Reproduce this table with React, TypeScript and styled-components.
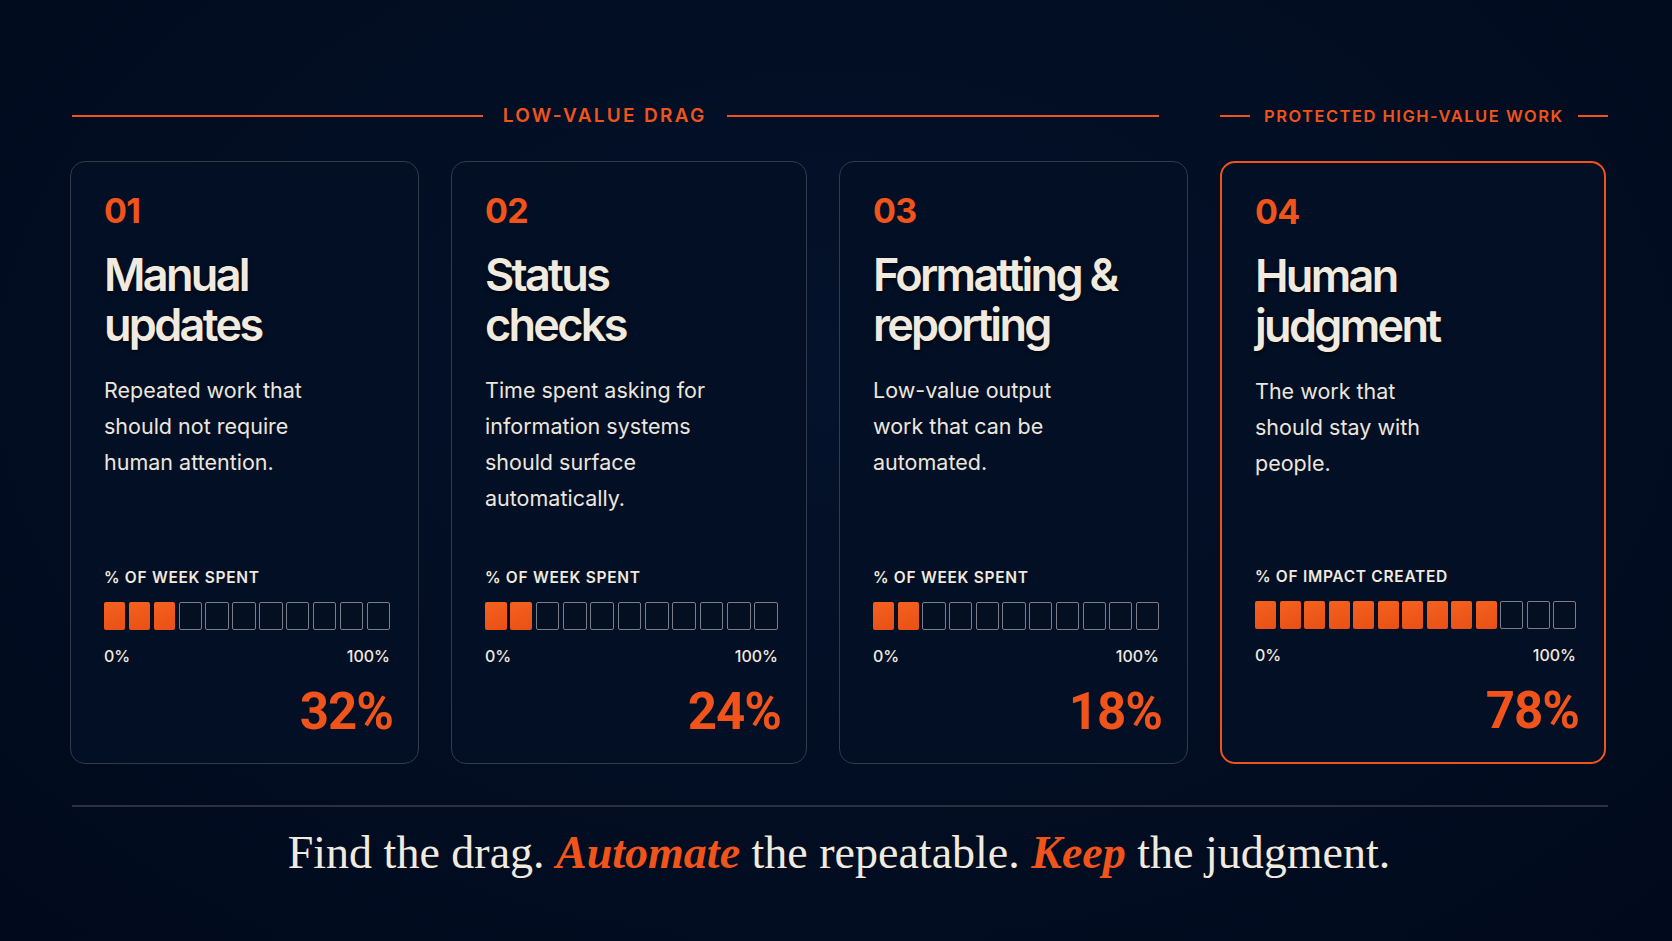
import React from "react"
import styled, { createGlobalStyle, css } from "styled-components"

const ORANGE = "#f0541b"
const CREAM = "#f1eadf"

const GlobalStyle = createGlobalStyle`
  html, body {
    margin: 0;
    padding: 0;
    background: #020d22;
  }
  * {
    box-sizing: border-box;
  }
`

const Page = styled.div`
  width: 1672px;
  height: 941px;
  padding: 102px 64px 0 70px;
  background: radial-gradient(ellipse at 50% 40%, #04122b 0%, #020d22 60%, #010a1c 100%);
  font-family: Inter, "Noto Sans", sans-serif;
  color: ${CREAM};
`

const Columns = styled.div`
  display: grid;
  grid-template-columns: 349px 356px 349px 386px;
  column-gap: 32px;
`

const HeaderRow = styled(Columns)`
  height: 28px;
  margin-bottom: 31px;
`

const Group = styled.div<{ $span?: number; $short?: boolean }>`
  grid-column: span ${(p) => p.$span ?? 1};
  display: flex;
  align-items: center;
  gap: ${(p) => (p.$short ? "14px" : "20px")};
  padding-right: ${(p) => (p.$span ? "29px" : "0")};
  padding-left: ${(p) => (p.$span ? "2px" : "0")};
`

const Rule = styled.span<{ $fixed?: boolean; $grow?: number }>`
  height: 1.5px;
  background: ${ORANGE};
  ${(p) =>
    p.$fixed
      ? css`
          width: 30px;
          flex: none;
        `
      : css`
          flex: ${p.$grow ?? 1};
        `}
`

const GroupLabel = styled.span<{ $small?: boolean }>`
  font-size: ${(p) => (p.$small ? "16.5px" : "19px")};
  font-weight: 600;
  letter-spacing: ${(p) => (p.$small ? "1.5px" : "2.3px")};
  color: ${ORANGE};
  white-space: nowrap;
  line-height: 28px;
`

const Card = styled.div<{ $accent?: boolean }>`
  height: 603px;
  display: flex;
  flex-direction: column;
  padding: 32px 28px 26px 33px;
  border-radius: 15px;
  border: ${(p) => (p.$accent ? `2px solid ${ORANGE}` : "1.5px solid #323a4b")};
  background: #030f25;
`

const Num = styled.div`
  font-size: 34px;
  line-height: 34px;
  font-weight: 700;
  color: ${ORANGE};
  letter-spacing: -0.02em;
`

const Title = styled.h2`
  margin: 22px 0 0;
  font-size: 45px;
  line-height: 50px;
  font-weight: 600;
  letter-spacing: -0.06em;
  color: ${CREAM};
  text-shadow: 0 2px 4px rgba(0, 0, 0, 0.6);
`

const Desc = styled.p`
  margin: 22px 0 0;
  font-size: 21.5px;
  line-height: 36px;
  font-weight: 400;
  letter-spacing: 0;
  color: #ece6dc;
`

const Bottom = styled.div`
  margin-top: auto;
  display: flex;
  flex-direction: column;
`

const MetricLabel = styled.div`
  font-size: 15.5px;
  line-height: 20px;
  font-weight: 600;
  letter-spacing: 0.7px;
  color: ${CREAM};
`

const Blocks = styled.div`
  display: flex;
  gap: 3.5px;
  height: 28px;
  margin-top: 14px;
`

const Block = styled.span<{ $on: boolean }>`
  flex: 1;
  border-radius: 2px;
  ${(p) =>
    p.$on
      ? css`
          background: linear-gradient(160deg, #f4621f, #e94f16);
        `
      : css`
          border: 1.5px solid #7a7e88;
          background: #040f22;
        `}
`

const Scale = styled.div`
  display: flex;
  justify-content: space-between;
  margin-top: 16px;
  font-size: 16px;
  line-height: 20px;
  font-weight: 500;
  color: ${CREAM};
`

const Big = styled.div`
  margin: 21px -3px 0 0;
  text-align: right;
  font-family: Roboto, Inter, sans-serif;
  font-size: 51px;
  line-height: 50px;
  font-weight: 700;
  letter-spacing: -0.02em;
  color: ${ORANGE};
`

const Divider = styled.div`
  margin-top: 41px;
  margin-left: 2px;
  height: 1.5px;
  background: #2a3242;
`

const Tagline = styled.p`
  margin: 21px 0 0;
  text-align: center;
  font-family: "Liberation Serif", "Times New Roman", serif;
  font-size: 46px;
  line-height: 50px;
  color: ${CREAM};
`

const Em = styled.em`
  color: ${ORANGE};
  font-weight: 700;
`

type Item = {
  num: string
  title: string[]
  desc: string[]
  label: string
  filled: number
  total: number
  pct: string
  accent?: boolean
}

const items: Item[] = [
  {
    num: "01",
    title: ["Manual", "updates"],
    desc: ["Repeated work that", "should not require", "human attention."],
    label: "% OF WEEK SPENT",
    filled: 3,
    total: 11,
    pct: "32%",
  },
  {
    num: "02",
    title: ["Status", "checks"],
    desc: ["Time spent asking for", "information systems", "should surface", "automatically."],
    label: "% OF WEEK SPENT",
    filled: 2,
    total: 11,
    pct: "24%",
  },
  {
    num: "03",
    title: ["Formatting &", "reporting"],
    desc: ["Low-value output", "work that can be", "automated."],
    label: "% OF WEEK SPENT",
    filled: 2,
    total: 11,
    pct: "18%",
  },
  {
    num: "04",
    title: ["Human", "judgment"],
    desc: ["The work that", "should stay with", "people."],
    label: "% OF IMPACT CREATED",
    filled: 10,
    total: 13,
    pct: "78%",
    accent: true,
  },
]

const lines = (arr: string[]) =>
  arr.map((l, i) => (
    <React.Fragment key={i}>
      {i > 0 && <br />}
      {l}
    </React.Fragment>
  ))

const App: React.FC = () => {
  return (
    <Page>
      <GlobalStyle />
      <HeaderRow>
        <Group $span={3}>
          <Rule $grow={0.95} />
          <GroupLabel>LOW-VALUE DRAG</GroupLabel>
          <Rule />
        </Group>
        <Group $short>
          <Rule $fixed />
          <GroupLabel $small>PROTECTED HIGH-VALUE WORK</GroupLabel>
          <Rule $fixed />
        </Group>
      </HeaderRow>

      <Columns>
        {items.map((it) => (
          <Card key={it.num} $accent={it.accent}>
            <Num>{it.num}</Num>
            <Title>{lines(it.title)}</Title>
            <Desc>{lines(it.desc)}</Desc>
            <Bottom>
              <MetricLabel>{it.label}</MetricLabel>
              <Blocks>
                {Array.from({ length: it.total }).map((_, i) => (
                  <Block key={i} $on={i < it.filled} />
                ))}
              </Blocks>
              <Scale>
                <span>0%</span>
                <span>100%</span>
              </Scale>
              <Big>{it.pct}</Big>
            </Bottom>
          </Card>
        ))}
      </Columns>

      <Divider />
      <Tagline>
        Find the drag. <Em>Automate</Em> the repeatable. <Em>Keep</Em> the judgment.
      </Tagline>
    </Page>
  )
}

export default App
